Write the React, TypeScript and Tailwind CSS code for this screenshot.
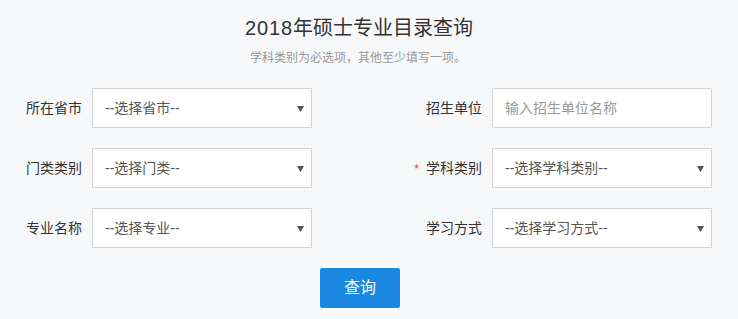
import React from "react";

const font = { fontFamily: '"Liberation Sans", "Noto Sans CJK SC", sans-serif' };

function Arrow() {
  return (
    <svg width="7" height="6" viewBox="0 0 7 6" className="absolute right-[7px] top-[17px]">
      <polygon points="0,0 7,0 3.5,6" fill="#555" />
    </svg>
  );
}

function SelectBox({ text }: { text: string }) {
  return (
    <div className="relative w-[220px] h-[40px] bg-white border border-[#d4d4d4] flex items-center pl-[12px] text-[14px] text-[#555]">
      <span className="leading-[20px]">{text}</span>
      <Arrow />
    </div>
  );
}

function InputBox({ placeholder }: { placeholder: string }) {
  return (
    <div className="w-[220px] h-[40px] bg-white border border-[#d4d4d4] rounded-[2px] flex items-center pl-[12px] text-[14px] text-[#999]">
      <span className="leading-[20px]">{placeholder}</span>
    </div>
  );
}

function Field({ label, required, children }: { label: string; required?: boolean; children: React.ReactNode }) {
  return (
    <div className="flex items-center">
      <div className="w-[80px] pr-[10px] text-right text-[14px] leading-[20px] text-[#333]">
        {required && <span className="text-[#e64340] mr-[7px] text-[12px]">*</span>}
        {label}
      </div>
      {children}
    </div>
  );
}

export default function App() {
  return (
    <div className="w-[738px] h-[319px] bg-[#f7f8fa] overflow-hidden" style={font}>
      <h1 className="text-center text-[20px] leading-[28px] pt-[14px] pr-[20px] text-[#333]">
        <span className="tracking-[0.9px]">2018</span>年硕士专业目录查询
      </h1>
      <p className="text-center text-[12px] leading-[16px] mt-[8px] pr-[22px] text-[#999]">学科类别为必选项，其他至少填写一项。</p>
      <div className="grid grid-cols-[300px_300px] gap-x-[100px] gap-y-[20px] pl-[12px] mt-[22px]">
        <Field label="所在省市"><SelectBox text="--选择省市--" /></Field>
        <Field label="招生单位"><InputBox placeholder="输入招生单位名称" /></Field>
        <Field label="门类类别"><SelectBox text="--选择门类--" /></Field>
        <Field label="学科类别" required><SelectBox text="--选择学科类别--" /></Field>
        <Field label="专业名称"><SelectBox text="--选择专业--" /></Field>
        <Field label="学习方式"><SelectBox text="--选择学习方式--" /></Field>
      </div>
      <div className="mt-[20px] pl-[320px]">
        <button className="w-[80px] h-[40px] bg-[#1a88e0] rounded-[2px] text-white text-[16px] leading-[20px]">查询</button>
      </div>
    </div>
  );
}
